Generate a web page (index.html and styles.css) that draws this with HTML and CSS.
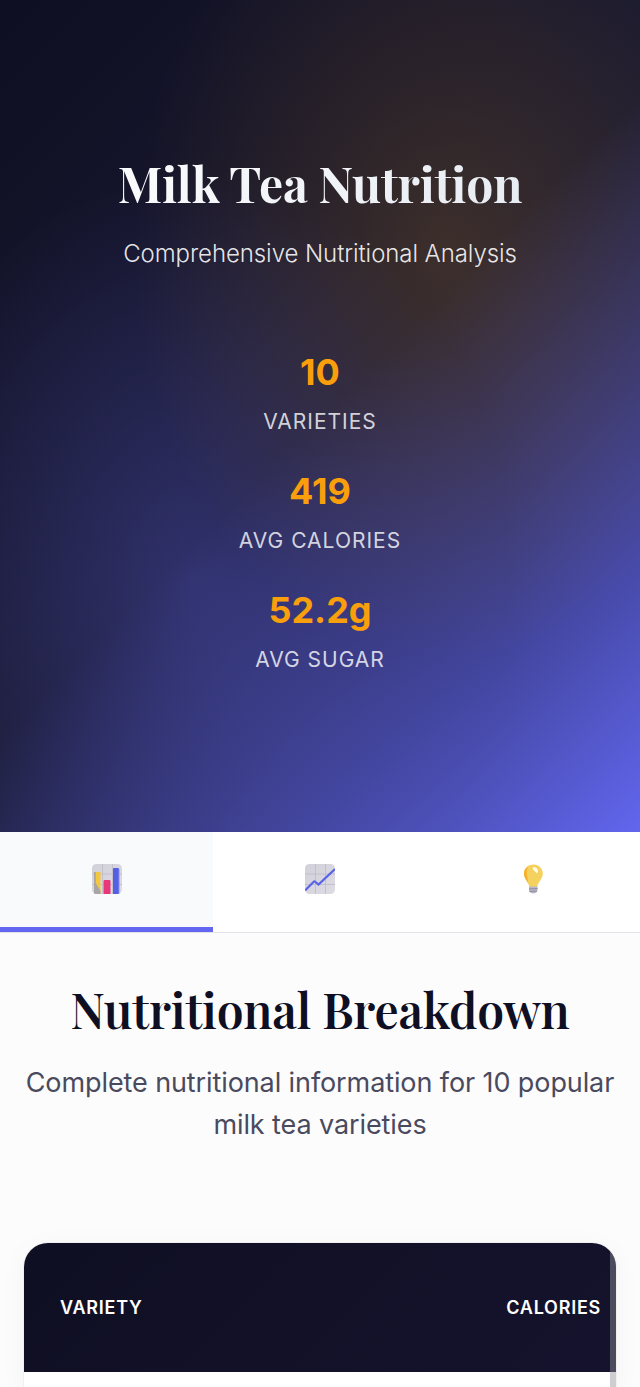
FILE: index.html
```html
<!DOCTYPE html>
<html lang="en">
<head>
<meta charset="utf-8">
<title>Milk Tea Nutrition</title>
<link rel="stylesheet" href="styles.css">
</head>
<body>
<header class="hero">
  <h1 class="hero-title">Milk Tea Nutrition</h1>
  <p class="hero-subtitle">Comprehensive Nutritional Analysis</p>
  <div class="stats">
    <div class="stat"><span class="stat-value">10</span><span class="stat-label">Varieties</span></div>
    <div class="stat"><span class="stat-value">419</span><span class="stat-label">Avg Calories</span></div>
    <div class="stat"><span class="stat-value">52.2g</span><span class="stat-label">Avg Sugar</span></div>
  </div>
</header>
<nav class="tabs">
  <button class="tab active" aria-label="Breakdown">
    <svg class="icon" viewBox="0 0 30 30">
      <defs>
        <linearGradient id="tile" x2="1" y2="1"><stop offset="0" stop-color="#d2d0da"/><stop offset="1" stop-color="#dddce3"/></linearGradient>
        <clipPath id="round"><rect width="30" height="30" rx="4.5"/></clipPath>
      </defs>
      <g clip-path="url(#round)">
        <rect width="30" height="30" fill="url(#tile)"/>
        <path d="M10.5 0v30M20.5 0v30M0 10h30M0 20.5h30" stroke="#c3c0cc"/>
        <path d="M2.500 8H8.500v22H2.500z" fill="#f3c83f"/>
        <path d="M2 8h1.800v11L8.500 27v3H2z" fill="#a9a5a5"/>
        <path d="M11.500 30V17q0-1 1-1h5q1 0 1 1v13z" fill="#e8387a"/>
        <path d="M21 30V5q0-1 1-1h4q1 0 1 1v25z" fill="#5360e4"/>
        <path d="M27 5v25" stroke="#8790ec"/>
      </g>
    </svg>
  </button>
  <button class="tab" aria-label="Trends">
    <svg class="icon" viewBox="0 0 30 30">
      <g clip-path="url(#round)">
        <rect width="30" height="30" fill="url(#tile)"/>
        <path d="M10.500 0v30M20.500 0v30M0 10h30M0 20.500h30" stroke="#c3c0cc"/>
        <path d="M0 26.500L8.500 18q1-1 2 0l3 2.500L30 5" fill="none" stroke="#5763e8" stroke-width="2.200"/>
      </g>
    </svg>
  </button>
  <button class="tab" aria-label="Insights">
    <svg class="icon" viewBox="0 0 30 30">
      <path d="M15.500 .5C9.500.5 6 4.500 6 9.500c0 5.500 4.500 8 5.300 13.500h8C20 17.500 24.800 15 24.800 9.500 24.800 4.500 21 .5 15.500.5z" fill="#f5d25e"/>
      <path d="M10.500 2.500C7.500 4 6 6.500 6 9.500c0 4.500 3 7 4.500 10.500L9 11c-.8-4 .2-6.500 1.500-8.500z" fill="#f6b02c"/>
      <path d="M15 3.500c2.500-.8 5 .8 5 4 0 1.500-1.500 2-2.500.5S14 5.500 15 3.500z" fill="#fffbea"/>
      <path d="M11 22.500h8.500v4q-.8 3-4.200 3t-4.300-3z" fill="#bab7c7"/>
      <path d="M11 25l8.500-.5M11.500 27.500l7.500-.5" stroke="#8d899f"/>
    </svg>
  </button>
</nav>
<main class="content">
  <h2 class="section-title">Nutritional Breakdown</h2>
  <p class="section-text">Complete nutritional information for 10 popular milk tea varieties</p>
  <div class="table-card">
    <div class="table-head"><span>Variety</span><span>Calories</span></div>
    <div class="scrollbar"></div>
  </div>
</main>
</body>
</html>
```
FILE: styles.css
```css
* { box-sizing: border-box; margin: 0; padding: 0; }
body {
  background: #fcfcfc;
  color: #0f0f23;
  font-family: Inter, "Liberation Sans", sans-serif;
}
.hero {
  height: 832px;
  padding-top: 152px;
  text-align: center;
  background:
    radial-gradient(ellipse at 70% 30%, rgba(245, 158, 11, .16) 0%, transparent 50%),
    radial-gradient(ellipse at 30% 70%, rgba(99, 102, 241, .3) 0%, transparent 50%),
    linear-gradient(135deg, #0f0f23 0%, #1a1a32 50%, #6166ee 100%);
}
.hero-title {
  font: 700 48px/62px "Playfair Display", "Liberation Serif", serif;
  letter-spacing: -.24px;
  background: linear-gradient(135deg, #fff 0%, #e2e8f0 100%);
  background-clip: text;
  -webkit-background-clip: text;
  color: transparent;
}
.hero-subtitle {
  margin-top: 21px;
  font-size: 24px;
  font-weight: 300;
  line-height: 38px;
  letter-spacing: -.08px;
  color: rgba(255, 255, 255, .9);
}
.stats { display: flex; flex-direction: column; gap: 24px; margin-top: 75px; }
.stat { display: flex; flex-direction: column; height: 95px; }
.stat-value { font-size: 36px; font-weight: 700; line-height: 48px; color: #f99f0b; }
.stat-label {
  margin-top: 9px;
  font-size: 21px;
  line-height: 34px;
  letter-spacing: 1px;
  text-transform: uppercase;
  color: rgba(255, 255, 255, .8);
}
.tabs { display: flex; height: 101px; background: #fff; border-bottom: 1px solid #e2e2e8; }
.tab {
  flex: 1;
  display: flex;
  align-items: center;
  justify-content: center;
  height: 100px;
  border: 0;
  border-bottom: 5px solid transparent;
  background: none;
}
.tab.active { background: #f8fafc; border-color: #6366f1; }
.icon { width: 30px; height: 30px; margin-bottom: 1px; }
.content { padding: 43px 24px 0; text-align: center; }
.section-title {
  font: 600 48px/66px "Playfair Display", "Liberation Serif", serif;
  letter-spacing: -.2px;
  white-space: nowrap;
}
.section-text { margin: 20px -12px 0; font-size: 27px; line-height: 42px; letter-spacing: -.1px; color: #4a4a5e; }
.table-card {
  position: relative;
  height: 144px;
  margin-top: 97px;
  border-radius: 24px 24px 0 0;
  overflow: hidden;
  background: #fff;
  box-shadow: 0 6px 30px rgba(15, 15, 35, .04), 0 0 0 1px rgba(15, 15, 35, .04);
}
.table-head {
  display: flex;
  align-items: center;
  justify-content: space-between;
  height: 129px;
  padding: 0 15px 0 36px;
  background: linear-gradient(135deg, #0f0f23, #15132d);
  color: #fff;
  font-size: 18px;
  font-weight: 600;
  letter-spacing: .75px;
  text-transform: uppercase;
}
.scrollbar { position: absolute; top: 0; right: 0; bottom: 0; width: 6px; background: rgba(145, 145, 155, .45); }
```
